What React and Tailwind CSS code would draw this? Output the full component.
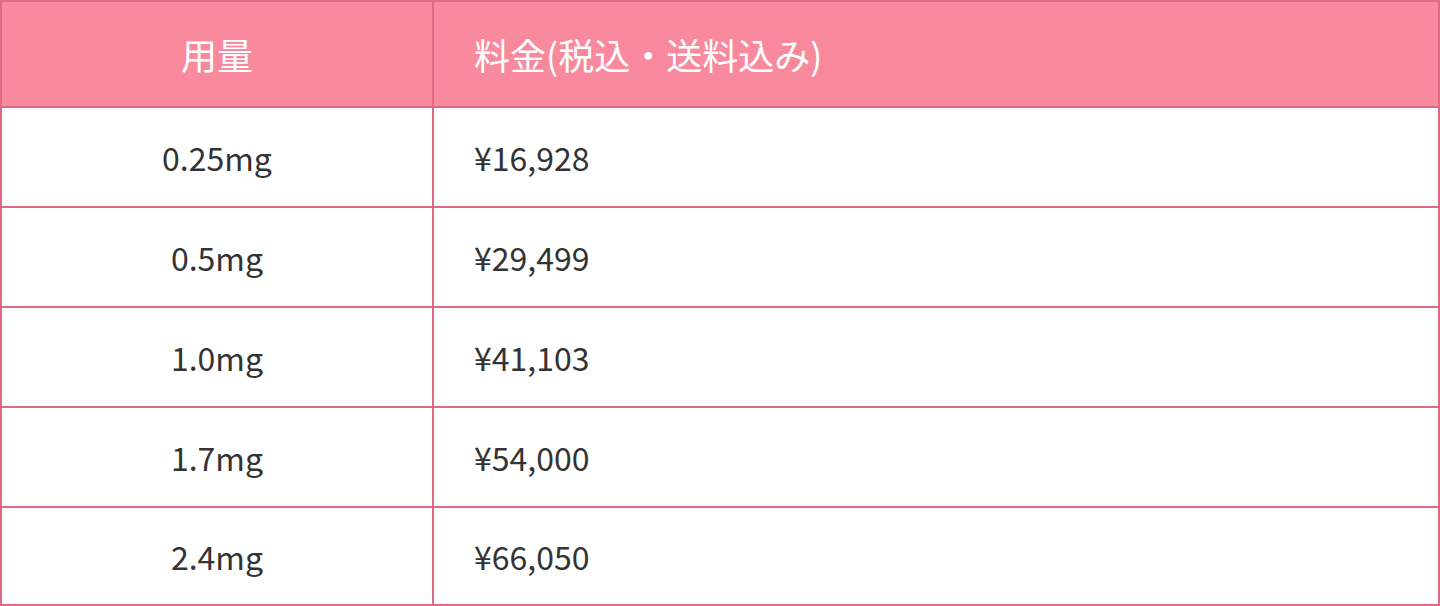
const rows = [
  ['0.25mg', '¥16,928'],
  ['0.5mg', '¥29,499'],
  ['1.0mg', '¥41,103'],
  ['1.7mg', '¥54,000'],
  ['2.4mg', '¥66,050'],
];

export default function App() {
  return (
    <div className="w-[1440px] h-[606px] bg-white" style={{ fontFamily: '"Noto Sans CJK JP", "Noto Sans", sans-serif' }}>
      <table className="w-full border-collapse border-2 border-[#de6a84] text-[#333333]">
        <thead>
          <tr className="bg-[#f98a9e] text-white h-[106px]">
            <th className="w-[432px] border-2 border-[#de6a84] text-center font-normal text-[36px]">用量</th>
            <th className="border-2 border-[#de6a84] text-left font-normal text-[36px] pl-[40px]">料金(税込・送料込み)</th>
          </tr>
        </thead>
        <tbody>
          {rows.map(([dose, price], i) => (
            <tr key={dose} className={i === rows.length - 1 ? 'h-[98px]' : 'h-[100px]'}>
              <td className="border-2 border-[#de6a84] text-center text-[32px]">{dose}</td>
              <td className="border-2 border-[#de6a84] text-left text-[32px] pl-[40px]">{price}</td>
            </tr>
          ))}
        </tbody>
      </table>
    </div>
  );
}
